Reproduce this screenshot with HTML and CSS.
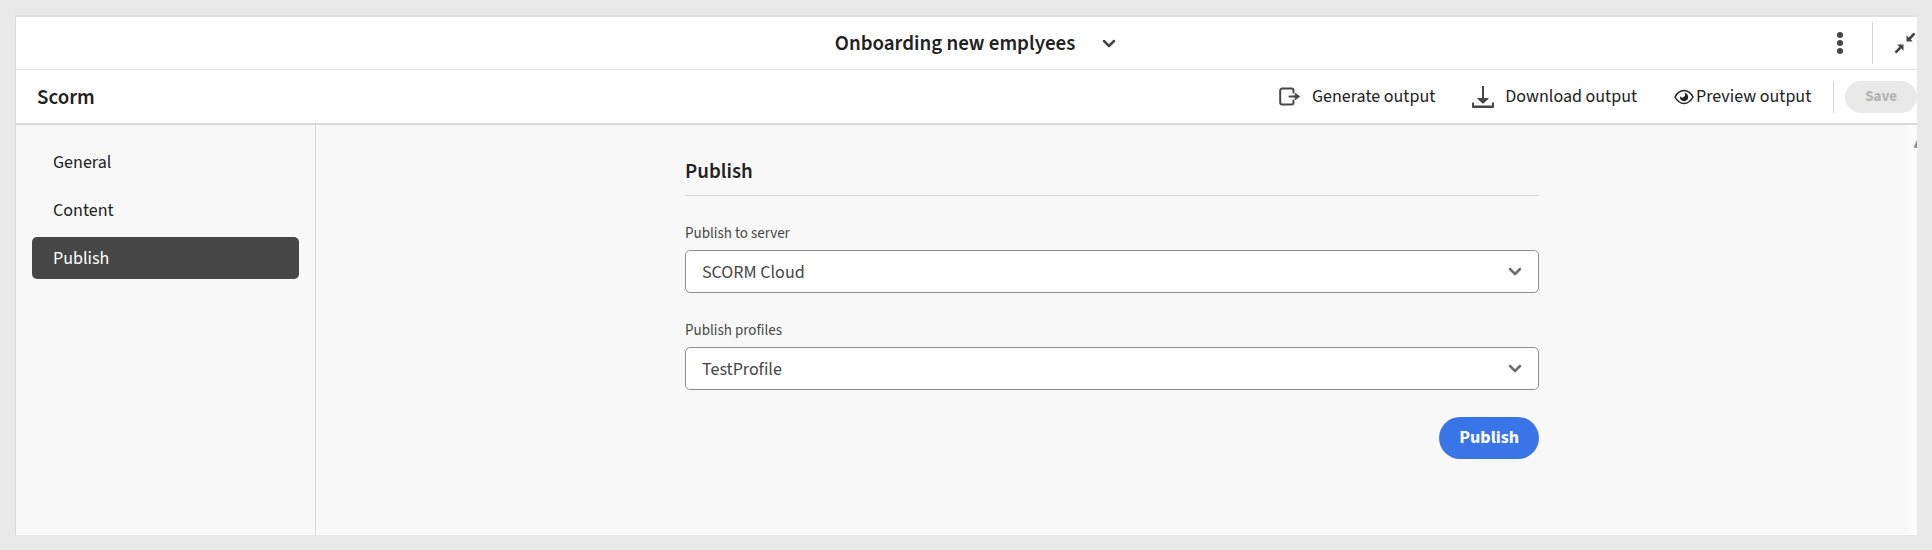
FILE: index.html
```html
<!DOCTYPE html>
<html lang="en">
<head>
<meta charset="utf-8">
<title>Onboarding new emplyees</title>
<link rel="stylesheet" href="styles.css">
</head>
<body>
<div class="panel">
  <header class="titlebar">
    <button class="course" type="button" aria-haspopup="menu">
      <span>Onboarding new emplyees</span>
      <svg class="chevron" viewBox="0 0 14 9" aria-hidden="true"><path d="M2 2l5 5 5-5"/></svg>
    </button>
    <div class="window-actions">
      <button class="icon-button" type="button" aria-label="More options">
        <svg width="6" height="22" viewBox="0 0 6 22" aria-hidden="true"><circle cx="3" cy="3" r="3"/><circle cx="3" cy="11" r="3"/><circle cx="3" cy="19" r="3"/></svg>
      </button>
      <span class="divider divider-tall"></span>
      <button class="icon-button" type="button" aria-label="Collapse">
        <svg width="22" height="22" viewBox="0 0 22 22" aria-hidden="true"><path d="M12.500 3.200V9.500h6.300L16.700 7.400l4.300-4.600a.8.8 0 0 0 0-1.100l-.8-.8a.8.8 0 0 0-1.100 0L14.700 5.400zM9.500 12.500v6.300L7.300 16.600l-4.400 4.500a.8.8 0 0 1-1.100 0L1 20.300a.8.8 0 0 1 0-1.100L5.300 14.700 3.200 12.500z"/></svg>
      </button>
    </div>
  </header>

  <div class="toolbar">
    <h1 class="heading">Scorm</h1>
    <div class="tools">
      <button class="tool" type="button">
        <svg class="outline" width="22" height="20" viewBox="0 0 22 20" aria-hidden="true"><path d="M14.500 5.500V3.500a2 2 0 0 0-2-2H3.200a2 2 0 0 0-2 2v12a2 2 0 0 0 2 2h9.300a2 2 0 0 0 2-2V13.500M10.500 9.500h6"/><path class="arrow-head" d="M16.500 6.500l4 3-4 3z"/></svg>
        <span>Generate output</span>
      </button>
      <button class="tool" type="button">
        <svg width="22" height="22" viewBox="0 0 22 22" aria-hidden="true"><path d="M10 0h2v12h4.200a.5.5 0 0 1 .4.800L11.400 17.400a.6.6 0 0 1-.8 0L5.400 12.800a.5.5 0 0 1 .4-.8H10zM0 16.500h2V19.500h18v-3h2v4.500a1 1 0 0 1-1 1H1a1 1 0 0 1-1-1z"/></svg>
        <span>Download output</span>
      </button>
      <button class="tool tool-tight" type="button">
        <svg width="20" height="16" viewBox="0 0 20 16" aria-hidden="true"><path class="eye" d="M1 8C3.400 3.600 6.500 1.500 10 1.500S16.600 3.600 19 8c-2.400 4.400-5.500 6.500-9 6.500S3.400 12.400 1 8z"/><path class="pupil" d="M10 3.800a4.200 4.200 0 1 1-4 3A2.300 2.300 0 0 0 10 7.800a2.300 2.300 0 0 0 0-4z"/></svg>
        <span>Preview output</span>
      </button>
    </div>
    <span class="divider"></span>
    <button class="save" type="button" disabled>Save</button>
  </div>

  <div class="workspace">
    <nav class="sidebar" aria-label="Settings">
      <a class="nav-item" href="#general">General</a>
      <a class="nav-item" href="#content">Content</a>
      <a class="nav-item nav-item-active" href="#publish" aria-current="page">Publish</a>
    </nav>
    <main class="content">
      <form class="form">
        <h2 class="heading form-title">Publish</h2>
        <div class="field">
          <label for="server">Publish to server</label>
          <div class="picker">
            <select id="server"><option>SCORM Cloud</option></select>
            <svg class="chevron" viewBox="0 0 14 9" aria-hidden="true"><path d="M2 2l5 5 5-5"/></svg>
          </div>
        </div>
        <div class="field">
          <label for="profile">Publish profiles</label>
          <div class="picker">
            <select id="profile"><option>TestProfile</option></select>
            <svg class="chevron" viewBox="0 0 14 9" aria-hidden="true"><path d="M2 2l5 5 5-5"/></svg>
          </div>
        </div>
        <button class="publish" type="button">Publish</button>
      </form>
    </main>
    <div class="gutter">
      <svg width="3" height="8" viewBox="0 0 3 8" aria-hidden="true"><path d="M3 0v8H1Q0 8 0 6.500z"/></svg>
    </div>
  </div>
</div>
</body>
</html>
```
FILE: styles.css
```css
* {
  box-sizing: border-box;
}

body {
  display: flex;
  min-height: 100vh;
  margin: 0;
  padding: 15px;
  background: #e9e9e9;
  color: #222;
  font-family: "Adobe Clean", "Source Sans 3", Lato, sans-serif;
  font-size: 18px;
  line-height: 24px;
}

button,
select {
  margin: 0;
  padding: 0;
  border: 0;
  background: none;
  color: inherit;
  font: inherit;
}

svg {
  display: block;
  flex: none;
  fill: #464646;
}

.panel {
  display: flex;
  flex: 1;
  flex-direction: column;
  min-width: 0;
  border-top: 2px solid #e1e1e1;
  border-left: 1px solid #dadada;
  background: #fff;
}

.titlebar {
  display: grid;
  grid-template-columns: 1fr auto 1fr;
  align-items: center;
  height: 53px;
  border-bottom: 1px solid #e1e1e1;
}

.course {
  display: flex;
  grid-column: 2;
  align-items: center;
  gap: 27px;
  padding-left: 18px;
  font-size: 21px;
  font-weight: 600;
}

.chevron {
  width: 14px;
  height: 9px;
  fill: none;
  stroke: #464646;
  stroke-linecap: round;
  stroke-linejoin: round;
  stroke-width: 2.5;
}

.window-actions {
  display: flex;
  align-items: center;
  justify-content: flex-end;
}

.icon-button {
  padding: 0 1px;
}

.divider {
  width: 1px;
  height: 32px;
  background: #d5d5d5;
}

.divider-tall {
  height: 42px;
  margin: 0 20px 0 28px;
}

.toolbar {
  display: flex;
  align-items: center;
  height: 55px;
  padding-left: 21px;
  border-bottom: 2px solid #dadada;
}

.heading {
  margin: 0;
  font-size: 21px;
  font-weight: 600;
  line-height: 28px;
}

.tools {
  display: flex;
  gap: 37px;
  margin: 0 22px 0 auto;
}

.tool {
  display: flex;
  align-items: center;
  gap: 11px;
}

.tool-tight {
  gap: 2px;
}

.outline {
  fill: none;
  stroke: #464646;
  stroke-linecap: round;
  stroke-linejoin: round;
  stroke-width: 2;
}

.arrow-head {
  fill: #464646;
  stroke-width: 1;
}

.eye {
  fill: none;
  stroke: #222;
  stroke-width: 1.5;
}

.pupil {
  fill: #222;
}

.save {
  height: 32px;
  margin-left: 11px;
  padding: 0 20px;
  border-radius: 16px;
  background: #e9e9e9;
  color: #b3b3b3;
  font-size: 15px;
  font-weight: 700;
}

.workspace {
  display: flex;
  flex: 1;
  background: #f8f8f8;
}

.sidebar {
  display: flex;
  flex: 0 0 300px;
  flex-direction: column;
  gap: 6px;
  padding: 16px;
  border-right: 1px solid #dadada;
}

.nav-item {
  padding: 10px 21px 8px;
  border-radius: 5px;
  color: #222;
  text-decoration: none;
}

.nav-item-active {
  background: #464646;
  color: #fff;
}

.content {
  flex: 1;
  padding: 32px 24px;
}

.form {
  display: flex;
  flex-direction: column;
  gap: 27px;
  max-width: 854px;
  margin: 0 auto;
}

.form-title {
  padding-bottom: 10px;
  border-bottom: 1px solid #d5d5d5;
}

.field {
  display: flex;
  flex-direction: column;
  gap: 5px;
  color: #464646;
}

.field label {
  font-size: 15px;
  line-height: 22px;
}

.picker {
  position: relative;
}

.picker select {
  display: block;
  width: 100%;
  height: 43px;
  padding: 2px 48px 0 16px;
  border: 1px solid #8e8e8e;
  border-radius: 5px;
  appearance: none;
  background: #fff;
}

.picker .chevron {
  position: absolute;
  top: 17px;
  right: 17px;
  stroke: #6d6d6d;
  pointer-events: none;
}

.publish {
  align-self: flex-end;
  height: 42px;
  padding: 0 20px;
  border-radius: 21px;
  background: #3a75e8;
  color: #fff;
  font-weight: 700;
}

.gutter {
  display: flex;
  flex: 0 0 9px;
  align-items: flex-start;
  justify-content: flex-end;
  padding-top: 15px;
  background: #fcfcfc;
}

.gutter svg {
  fill: #8e8e8e;
}
```
